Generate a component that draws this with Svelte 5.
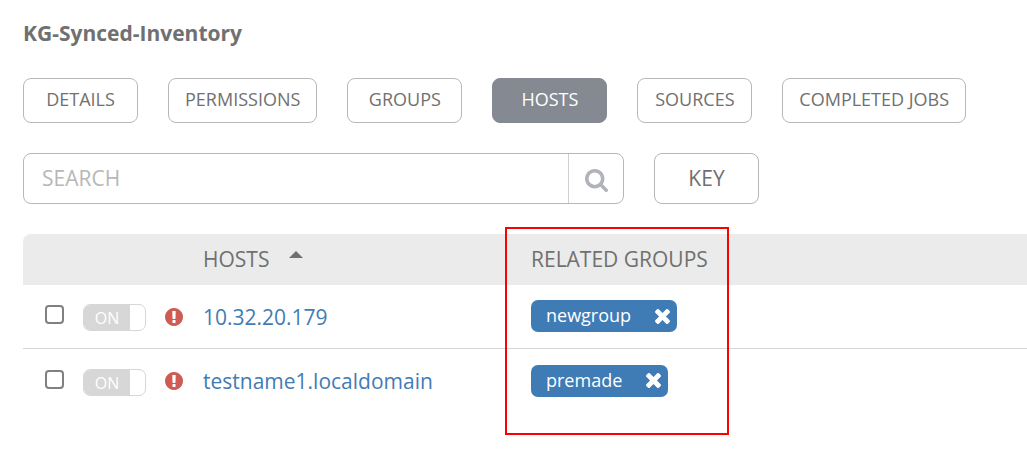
<script>
  const tabs = ['DETAILS', 'PERMISSIONS', 'GROUPS', 'HOSTS', 'SOURCES', 'COMPLETED JOBS'];
  let active = $state('HOSTS');
  let query = $state('');
  let hosts = $state([
    { name: '10.32.20.179', on: true, selected: false, groups: ['newgroup'] },
    { name: 'testname1.localdomain', on: true, selected: false, groups: ['premade'] }
  ]);
</script>

<main>
  <h1>KG-Synced-Inventory</h1>

  <nav>
    {#each tabs as tab}
      <button type="button" class="tab" class:active={active === tab} onclick={() => (active = tab)}>{tab}</button>
    {/each}
  </nav>

  <div class="tools">
    <form class="search" onsubmit={(e) => e.preventDefault()}>
      <input type="text" aria-label="Search" placeholder="SEARCH" bind:value={query} />
      <button type="submit" aria-label="Search">
        <svg viewBox="64 128 1664 1664" width="23" height="23" aria-hidden="true"><path d="M1216 832q0-185-131.5-316.5t-316.5-131.5-316.5 131.5-131.5 316.5 131.5 316.5 316.5 131.5 316.5-131.5 131.5-316.5zm512 832q0 52-38 90t-90 38q-54 0-90-38l-343-342q-179 124-399 124-143 0-273.5-55.5t-225-150-150-225-55.5-273.5 55.5-273.5 150-225 225-150 273.5-55.5 273.5 55.5 225 150 150 225 55.5 273.5q0 220-124 399l343 343q37 37 37 90z" /></svg>
      </button>
    </form>
    <button type="button" class="key">KEY</button>
  </div>

  <table>
    <colgroup>
      <col class="c-check" />
      <col class="c-toggle" />
      <col class="c-status" />
      <col class="c-host" />
      <col />
    </colgroup>
    <thead>
      <tr>
        <th class="corner"></th>
        <th></th>
        <th></th>
        <th aria-sort="ascending">
          <button type="button" class="sort">HOSTS<span class="caret"></span></button>
        </th>
        <th class="groups-head">RELATED GROUPS<span class="highlight"></span></th>
      </tr>
    </thead>
    <tbody>
      {#each hosts as host}
        <tr>
          <td class="check"><input type="checkbox" aria-label={`Select ${host.name}`} bind:checked={host.selected} /></td>
          <td class="switch">
            <button type="button" class="toggle" role="switch" aria-checked={host.on} aria-label={`${host.name} enabled`} onclick={() => (host.on = !host.on)}>
              <span>{host.on ? 'ON' : 'OFF'}</span>
            </button>
          </td>
          <td>
            <svg class="status" viewBox="128 128 1536 1536" width="18" height="18" role="img" aria-label="Failed"><path d="M896 128q209 0 385.5 103t279.5 279.5 103 385.5-103 385.5-279.5 279.5-385.5 103-385.5-103-279.5-279.5-103-385.5 103-385.5 279.5-279.5 385.5-103zm128 1247v-190q0-14-9-23.5t-22-9.5h-192q-13 0-23 10t-10 23v190q0 13 10 23t23 10h192q13 0 22-9.5t9-23.5zm-2-344l18-621q0-12-10-18-10-8-24-8h-220q-14 0-24 8-10 6-10 18l17 621q0 10 10 17.5t24 7.5h185q14 0 23.5-7.5t10.5-17.5z" /></svg>
          </td>
          <td><a href="#host">{host.name}</a></td>
          <td class="groups">
            {#each host.groups as group}
              <span class="tag">
                <span>{group}</span>
                <button type="button" aria-label={`Remove ${group}`} onclick={() => (host.groups = host.groups.filter((g) => g !== group))}>
                  <svg viewBox="302 366 1188 1188" width="15" height="15" aria-hidden="true"><path d="M1490 1322q0 40-28 68l-136 136q-28 28-68 28t-68-28l-294-294-294 294q-28 28-68 28t-68-28l-136-136q-28-28-28-68t28-68l294-294-294-294q-28-28-28-68t28-68l136-136q28-28 68-28t68 28l294 294 294-294q28-28 68-28t68 28l136 136q28 28 28 68t-28 68l-294 294 294 294q28 28 28 68z" /></svg>
                </button>
              </span>
            {/each}
          </td>
        </tr>
      {/each}
    </tbody>
  </table>
</main>

<style>
  :global(body) {
    background: #fff;
  }
  main {
    padding: 18px 0 24px 23px;
    font: 21px/30px 'Open Sans', sans-serif;
    color: #707070;
    overflow-x: hidden;
  }
  * {
    box-sizing: border-box;
  }
  button,
  input {
    font: inherit;
    color: inherit;
    margin: 0;
  }
  button {
    cursor: pointer;
    padding: 0;
    border: 0;
    background: none;
  }
  svg {
    display: block;
    fill: currentColor;
  }
  h1 {
    margin: 0 0 30px;
    font-size: 21px;
    font-weight: 700;
  }
  nav {
    display: flex;
    gap: 30px;
    margin-bottom: 30px;
  }
  .tab {
    min-width: 115px;
    height: 45px;
    padding: 0 16px 4px;
    font-size: 18px;
    line-height: 24px;
    white-space: nowrap;
    border: 1px solid #b7b7b7;
    border-radius: 8px;
    background: #fff;
  }
  .tab.active {
    background: #848992;
    border-color: #848992;
    color: #fff;
  }
  .tools {
    display: flex;
    gap: 30px;
    margin-bottom: 30px;
  }
  .search {
    display: flex;
    flex: 0 1 601px;
    height: 51px;
    border: 1px solid #b7b7b7;
    border-radius: 8px;
  }
  .search input {
    flex: 1;
    min-width: 0;
    padding: 0 18px 2px;
    border: 0;
    background: none;
    outline: none;
  }
  .search input::placeholder {
    color: #b7b7b7;
    opacity: 1;
  }
  .search button {
    display: grid;
    place-items: center;
    width: 55px;
    padding-top: 4px;
    border-left: 1px solid #d0d0d0;
    color: #b0b3b9;
  }
  .key {
    width: 105px;
    padding-bottom: 2px;
    border: 1px solid #b7b7b7;
    border-radius: 8px;
  }
  table {
    width: 100%;
    table-layout: fixed;
    border-collapse: separate;
    border-spacing: 0;
  }
  .c-check {
    width: 60px;
  }
  .c-toggle {
    width: 82px;
  }
  .c-status {
    width: 38px;
  }
  .c-host {
    width: 328px;
  }
  th {
    height: 51px;
    padding: 0 0 2px;
    background: #ebebeb;
    font-weight: 400;
    text-align: left;
  }
  .corner {
    border-top-left-radius: 8px;
  }
  .sort {
    display: flex;
    gap: 20px;
  }
  .caret {
    align-self: flex-start;
    margin-top: 7px;
    border: 7px solid transparent;
    border-top-width: 0;
    border-bottom-color: #707070;
  }
  .groups-head {
    position: relative;
  }
  .highlight {
    position: absolute;
    top: -7px;
    left: -26px;
    width: 224px;
    height: 208px;
    border: 2px solid #f00;
    pointer-events: none;
  }
  td {
    height: 64px;
    padding: 0;
    border-bottom: 1px solid #d7d7d7;
  }
  tr:last-child td {
    border-bottom: 0;
  }
  .check input {
    display: block;
    appearance: none;
    width: 19px;
    height: 19px;
    margin: 0 0 4px 22px;
    border: 2px solid #808080;
    border-radius: 4px;
    background: #fff;
  }
  .check input:checked {
    background: #848992;
  }
  .switch {
    padding-top: 2px;
  }
  .toggle {
    display: block;
    width: 63px;
    height: 27px;
    border: 1px solid #d7d7d7;
    border-radius: 7px;
    overflow: hidden;
    color: #fff;
    font-size: 16px;
    line-height: 26px;
  }
  .toggle span {
    display: block;
    width: 46px;
    background: #d7d7d7;
  }
  .status {
    color: #cf5b54;
  }
  a {
    color: #437bb4;
    text-decoration: none;
  }
  .groups {
    padding-bottom: 2px;
  }
  .tag {
    display: inline-flex;
    align-items: center;
    gap: 24px;
    height: 32px;
    padding: 0 7px 0 15px;
    border-radius: 7px;
    background: #3f7bb5;
    color: #fff;
    font-size: 18px;
    line-height: 28px;
    vertical-align: middle;
  }
  .tag > span {
    padding-bottom: 2px;
  }
</style>
